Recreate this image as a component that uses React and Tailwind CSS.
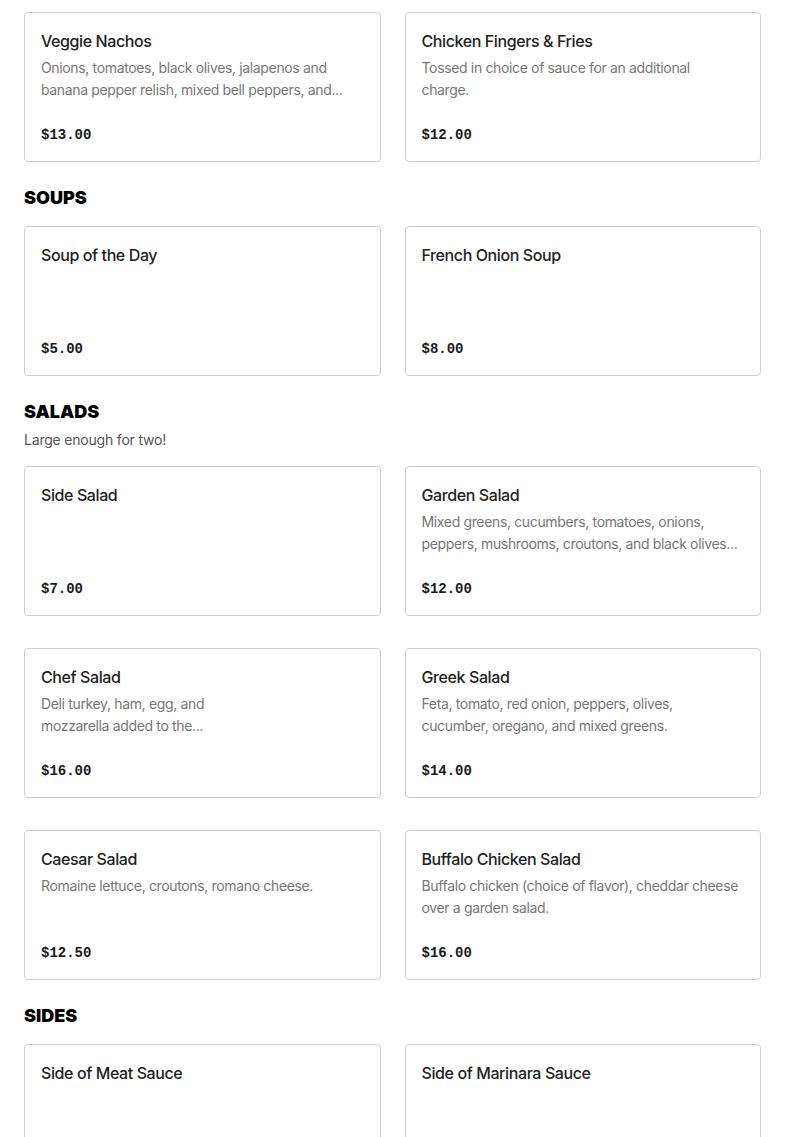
const sections = [
  {
    title: null,
    items: [
      { name: 'Veggie Nachos', desc: 'Onions, tomatoes, black olives, jalapenos and banana pepper relish, mixed bell peppers, and...', price: '$13.00' },
      { name: 'Chicken Fingers & Fries', desc: 'Tossed in choice of sauce for an additional charge.', price: '$12.00', narrow: 'max-w-[290px]' },
    ],
  },
  {
    title: 'SOUPS',
    items: [
      { name: 'Soup of the Day', price: '$5.00' },
      { name: 'French Onion Soup', price: '$8.00' },
    ],
  },
  {
    title: 'SALADS',
    sub: 'Large enough for two!',
    items: [
      { name: 'Side Salad', price: '$7.00' },
      { name: 'Garden Salad', desc: 'Mixed greens, cucumbers, tomatoes, onions, peppers, mushrooms, croutons, and black olives...', price: '$12.00' },
      { name: 'Chef Salad', desc: 'Deli turkey, ham, egg, and mozzarella added to the...', price: '$16.00', narrow: 'max-w-[180px]' },
      { name: 'Greek Salad', desc: 'Feta, tomato, red onion, peppers, olives, cucumber, oregano, and mixed greens.', price: '$14.00', narrow: 'max-w-[270px]' },
      { name: 'Caesar Salad', desc: 'Romaine lettuce, croutons, romano cheese.', price: '$12.50' },
      { name: 'Buffalo Chicken Salad', desc: 'Buffalo chicken (choice of flavor), cheddar cheese over a garden salad.', price: '$16.00' },
    ],
  },
  {
    title: 'SIDES',
    items: [
      { name: 'Side of Meat Sauce', price: '$3.00' },
      { name: 'Side of Marinara Sauce', price: '$3.00' },
    ],
  },
]

const Card = ({ name, desc, price, narrow }) => {
  return (
    <div className="flex h-[150px] flex-col rounded border border-[#cfcfcf] bg-white p-4">
      <h3 className="text-[16px] font-medium leading-6 tracking-[-0.4px] text-[#222]">{name}</h3>
      {desc && (
        <p className={`mt-1 line-clamp-2 text-[14px] leading-[22px] tracking-[-0.35px] text-[#777] ${narrow || ''}`}>
          {desc}
        </p>
      )}
      <div className="mt-auto font-['Liberation_Mono',monospace] text-[14px] font-bold leading-5 text-[#1a1a1a]">
        {price}
      </div>
    </div>
  )
}

export default function App() {
  return (
    <div className="min-h-screen bg-white px-6 pt-3 font-['Inter',sans-serif]">
      {sections.map((s, i) => (
        <section key={i}>
          {s.title && (
            <div className={`mt-[22px] ${s.sub ? 'mb-[15px]' : 'mb-3.5'}`}>
              <h2 className="text-[18px] font-black leading-7 text-black">{s.title}</h2>
              {s.sub && <p className="mt-[3px] text-[14px] leading-[22px] tracking-[-0.2px] text-[#555]">{s.sub}</p>}
            </div>
          )}
          <div className="grid grid-cols-2 gap-x-6 gap-y-8">
            {s.items.map((it) => (
              <Card key={it.name} {...it} />
            ))}
          </div>
        </section>
      ))}
    </div>
  )
}
